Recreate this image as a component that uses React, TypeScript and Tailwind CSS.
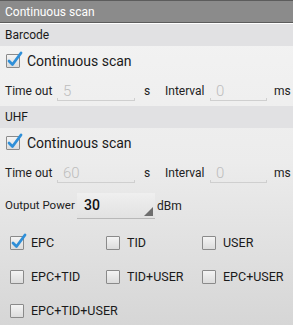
import React from 'react';

function Check({ checked }: { checked?: boolean }) {
  return (
    <span className="relative inline-block w-[14px] h-[14px] shrink-0 border border-[#8a8a8a] bg-gradient-to-b from-[#f4f4f4] to-[#dcdcdc] rounded-[1px]">
      {checked && (
        <svg
          className="absolute -left-[1px] -top-[4px]"
          width="17"
          height="17"
          viewBox="0 0 17 17"
        >
          <path
            d="M3 10 L6.5 13.5 L15 2"
            fill="none"
            stroke="#2f8fd8"
            strokeWidth="2.8"
            strokeLinecap="round"
            strokeLinejoin="round"
          />
        </svg>
      )}
    </span>
  );
}

function Field({ value, w }: { value: string; w: string }) {
  return (
    <div className={`relative h-[26px] ${w} shrink-0`}>
      <span className="absolute left-[6px] top-[2px] text-[15px] text-[#bdbdbd] font-light">
        {value}
      </span>
      <div className="absolute left-0 right-0 bottom-[3px] h-[1px] bg-[#cfcfcf]" />
      <div className="absolute left-0 bottom-[3px] w-[1px] h-[3px] bg-[#cfcfcf]" />
      <div className="absolute right-0 bottom-[3px] w-[1px] h-[3px] bg-[#cfcfcf]" />
    </div>
  );
}

function TimeRow({ timeout }: { timeout: string }) {
  return (
    <div className="flex items-center h-[30px] pl-[5px] text-[12px] text-[#222] shrink-0">
      <span className="w-[52px] whitespace-nowrap">Time out</span>
      <Field value={timeout} w="w-[78px]" />
      <span className="ml-[9px] w-[21px]">s</span>
      <span className="w-[45px]">Interval</span>
      <Field value="0" w="w-[57px]" />
      <span className="ml-[7px]">ms</span>
    </div>
  );
}

function Header({ label }: { label: string }) {
  return (
    <div className="h-[22px] bg-[#e1e1e3] flex items-center pl-[5px] text-[12px] text-[#1a1a1a] shrink-0">
      {label}
    </div>
  );
}

function ScanRow() {
  return (
    <div className="flex items-center h-[30px] pl-[6px] gap-[7px] shrink-0">
      <Check checked />
      <span className="text-[14px] text-[#1a1a1a]">Continuous scan</span>
    </div>
  );
}

const options = [
  ['EPC', true],
  ['TID', false],
  ['USER', false],
  ['EPC+TID', false],
  ['TID+USER', false],
  ['EPC+USER', false],
  ['EPC+TID+USER', false],
] as const;

export default function App() {
  return (
    <div
      className="w-[293px] h-[325px] overflow-hidden flex flex-col bg-gradient-to-b from-[#f4f4f4] via-[#ececec] to-[#d6d6d6]"
      style={{ fontFamily: 'Roboto, "Noto Sans", sans-serif' }}
    >
      <div className="h-[23px] bg-[#8b8b8b] border-t border-b border-[#5c5c5c] flex items-center pl-[5px] text-[12px] text-white shrink-0">
        Continuous scan
      </div>
      <div className="h-[1px] bg-white shrink-0" />

      <Header label="Barcode" />
      <ScanRow />
      <TimeRow timeout="5" />

      <Header label="UHF" />
      <ScanRow />
      <TimeRow timeout="60" />

      <div className="flex items-center h-[36px] pl-[5px] text-[11.5px] text-[#222] shrink-0">
        <span className="w-[72px] whitespace-nowrap">Output Power</span>
        <div className="relative w-[78px] h-[26px] bg-gradient-to-b from-[#efefef] to-[#e2e2e2] border-b border-[#b8b8b8] flex items-center pl-[7px] text-[14px] font-medium text-[#111]">
          30
          <svg className="absolute right-[2px] bottom-[2px]" width="9" height="9" viewBox="0 0 9 9">
            <path d="M9 0 L9 9 L0 9 Z" fill="#6e6e6e" />
          </svg>
        </div>
        <span className="ml-[2px] text-[12px]">dBm</span>
      </div>

      <div className="grid grid-cols-[96px_96px_1fr] pl-[10px] mt-[2px]">
        {options.map(([label, checked]) => (
          <div key={label} className="flex items-center gap-[7px] h-[34px]">
            <Check checked={checked} />
            <span className="text-[12.5px] text-[#1a1a1a] whitespace-nowrap">{label}</span>
          </div>
        ))}
      </div>
    </div>
  );
}
